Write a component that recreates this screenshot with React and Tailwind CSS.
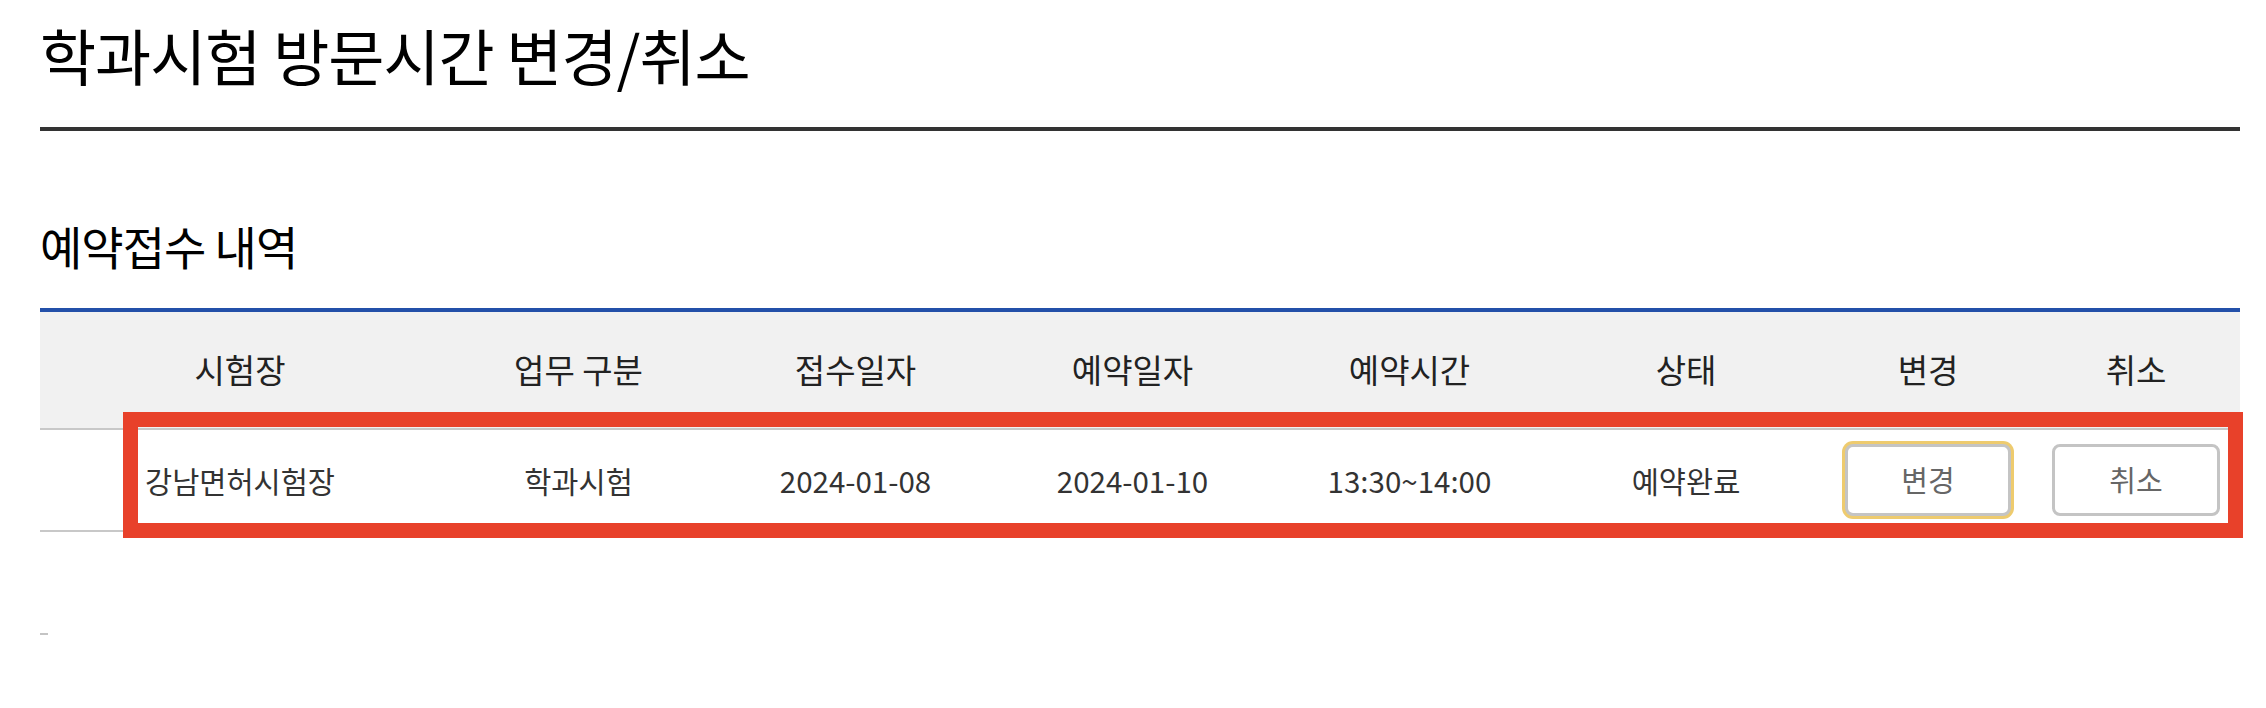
const headers = ['시험장', '업무 구분', '접수일자', '예약일자', '예약시간', '상태', '변경', '취소'];

const row = {
  site: '강남면허시험장',
  type: '학과시험',
  applied: '2024-01-08',
  reserved: '2024-01-10',
  time: '13:30~14:00',
  status: '예약완료',
};

const cols = 'grid grid-cols-[400px_277px_277px_277px_277px_276px_208px_208px]';

export default function App() {
  return (
    <div className="min-h-screen bg-white font-['Noto_Sans_CJK_KR','Noto_Sans',sans-serif]">
      <div className="ml-[40px] w-[2200px]">
        {/* Page title */}
        <h1 className="h-[131px] border-b-4 border-[#333333] pb-[18px] flex items-center text-[61px] font-normal text-[#000000] tracking-[-1px]">
          학과시험 방문시간 변경/취소
        </h1>

        {/* Section title */}
        <h2 className="mt-[84px] h-[60px] flex items-center text-[46px] font-normal text-[#000000] tracking-[-1px]">
          예약접수 내역
        </h2>

        {/* Table */}
        <div className="mt-[33px] border-t-4 border-[#2350a9]">
          <div className={`${cols} h-[118px] bg-[#f1f1f1] border-b-2 border-[#c8c8c8]`}>
            {headers.map((h) => (
              <div key={h} className="flex items-center justify-center text-[33px] text-[#222222]">
                {h}
              </div>
            ))}
          </div>

          <div className={`${cols} relative h-[102px] border-b-2 border-[#c8c8c8] text-[29.5px] text-[#333333]`}>
            <div className="flex items-center justify-center">{row.site}</div>
            <div className="flex items-center justify-center">{row.type}</div>
            <div className="flex items-center justify-center">{row.applied}</div>
            <div className="flex items-center justify-center">{row.reserved}</div>
            <div className="flex items-center justify-center">{row.time}</div>
            <div className="flex items-center justify-center">{row.status}</div>
            <div className="flex items-center justify-center">
              <button className="w-[166px] h-[72px] rounded-[8px] border-[3px] border-[#c4c4c4] ring-[3px] ring-[#eecb6e] bg-white text-[29px] text-[#666666]">
                변경
              </button>
            </div>
            <div className="flex items-center justify-center">
              <button className="w-[168px] h-[72px] rounded-[8px] border-[3px] border-[#c4c4c4] bg-white text-[29px] text-[#666666]">
                취소
              </button>
            </div>

            {/* highlight annotation */}
            <div className="absolute -top-[18px] left-[83px] -right-[3px] -bottom-[8px] border-[15px] border-[#e8412a] pointer-events-none" />
          </div>
        </div>

        <div className="mt-[101px] w-[8px] h-[2px] bg-[#c4c4c4]" />
      </div>
    </div>
  );
}
